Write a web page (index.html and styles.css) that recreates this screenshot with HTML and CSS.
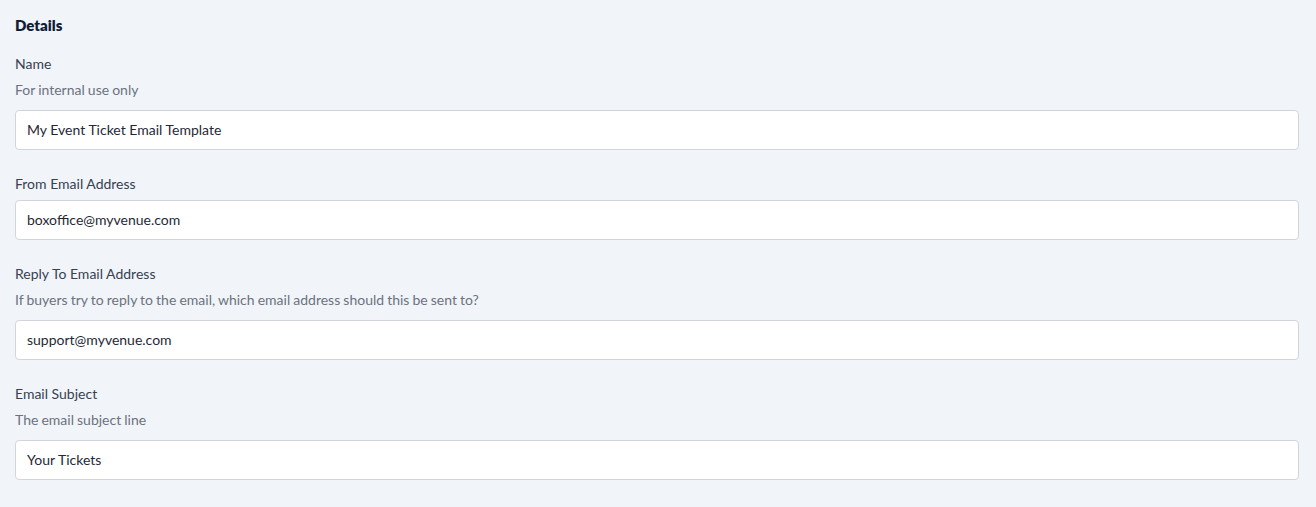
FILE: index.html
```html
<!DOCTYPE html>
<html lang="en">
<head>
	<meta charset="UTF-8">
	<title>Email Template Details</title>
	<link rel="stylesheet" href="styles.css">
</head>
<body>
	<div class="details">
		<h2 class="details-title">Details</h2>
		<div class="field">
			<label class="field-label" for="name">Name</label>
			<p class="field-hint">For internal use only</p>
			<input class="field-input" id="name" type="text" value="My Event Ticket Email Template">
		</div>
		<div class="field">
			<label class="field-label" for="from">From Email Address</label>
			<input class="field-input" id="from" type="text" value="boxoffice@myvenue.com">
		</div>
		<div class="field">
			<label class="field-label" for="reply">Reply To Email Address</label>
			<p class="field-hint">If buyers try to reply to the email, which email address should this be sent to?</p>
			<input class="field-input" id="reply" type="text" value="support@myvenue.com">
		</div>
		<div class="field">
			<label class="field-label" for="subject">Email Subject</label>
			<p class="field-hint">The email subject line</p>
			<input class="field-input" id="subject" type="text" value="Your Tickets">
		</div>
	</div>
</body>
</html>
```

FILE: styles.css
```css
*{
	margin: 0;
	padding: 0;
	box-sizing: border-box;
}
body{
	background: #f1f5f9;
	color: #374151;
	font-family: Lato, "Liberation Sans", sans-serif;
	font-size: 14px;
	line-height: 20px;
}
.details{
	padding: 15px 17px 0 15px;
}
.details-title{
	font-size: 15px;
	font-weight: 800;
	color: #111c36;
	margin-bottom: 19px;
}
.field{
	display: flex;
	flex-direction: column;
	margin-bottom: 24px;
}
.field-label{
	color: #374151;
	margin-bottom: 6px;
}
.field-hint{
	color: #6b7280;
	word-spacing: -0.5px;
	margin-bottom: 10px;
}
.field-input{
	height: 40px;
	padding: 0 11px 1px;
	border: 1px solid #d1d5db;
	border-radius: 4px;
	background: #fff;
	color: #1f2937;
	font-family: inherit;
	font-size: 14px;
	outline: none;
}
```
